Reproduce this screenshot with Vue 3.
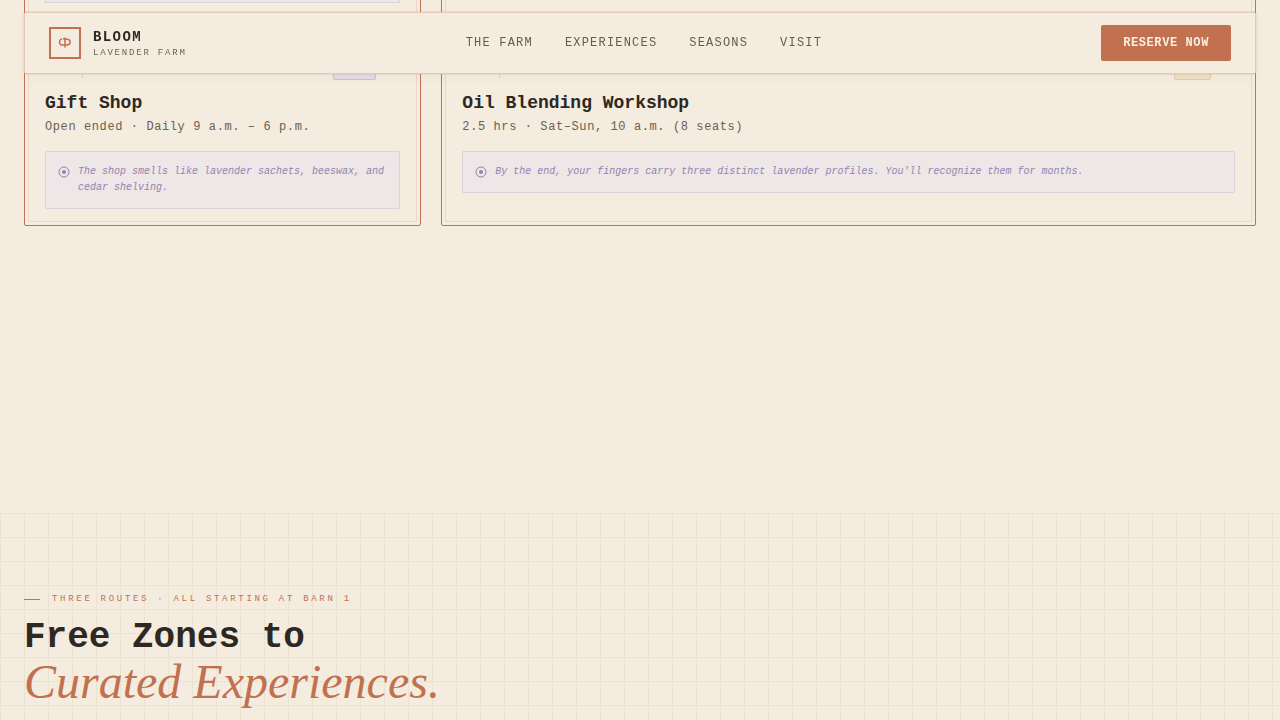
<script setup>
const links = ['The Farm', 'Experiences', 'Seasons', 'Visit']

const cards = [
  {
    title: 'Gift Shop',
    meta: 'Open ended · Daily 9 a.m. – 6 p.m.',
    note: 'The shop smells like lavender sachets, beeswax, and cedar shelving.',
    tone: 'free',
  },
  {
    title: 'Oil Blending Workshop',
    meta: '2.5 hrs · Sat–Sun, 10 a.m. (8 seats)',
    note: "By the end, your fingers carry three distinct lavender profiles. You'll recognize them for months.",
    tone: 'paid',
  },
]
</script>

<template>
  <div class="page">
    <header class="bar">
      <a class="brand" href="#top">
        <span class="mark">
          <svg width="14" height="14" viewBox="0 0 14 14" fill="none" stroke="currentColor" stroke-width="1.5" stroke-linecap="round" aria-hidden="true">
            <path d="M3.500 3C2.200 3.500 1.500 4.600 1.500 5.900c0 1.900 1.500 3.200 3.500 3.200h3.800c2 0 3.300-1.200 3.300-3 0-1.700-1.300-2.900-3-2.900H7.800" />
            <path d="M5.500 2.800c1.100.1 1.500.8 1.500 1.800M7 2v9" />
          </svg>
        </span>
        <span class="words">
          <strong>BLOOM</strong>
          <small>LAVENDER FARM</small>
        </span>
      </a>
      <nav>
        <a v-for="l in links" :key="l" href="#">{{ l }}</a>
      </nav>
      <button type="button" class="reserve">Reserve Now</button>
    </header>

    <main id="top">
      <section class="cards">
        <div class="card tail"><div class="note-end"></div></div>
        <div class="card tail wide"></div>
        <article v-for="c in cards" :key="c.title" class="card" :class="c.tone">
          <div class="top">
            <span class="tile"></span>
            <span class="tag"></span>
          </div>
          <h3>{{ c.title }}</h3>
          <p class="meta">{{ c.meta }}</p>
          <div class="note">
            <svg width="12" height="12" viewBox="0 0 12 12" aria-hidden="true">
              <circle cx="6" cy="6" r="5" fill="none" stroke="currentColor" />
              <circle cx="6" cy="6" r="2" fill="currentColor" />
            </svg>
            <p>{{ c.note }}</p>
          </div>
        </article>
      </section>

      <section class="routes">
        <p class="eyebrow">Three routes · All starting at Barn 1</p>
        <h2>Free Zones to <em>Curated Experiences.</em></h2>
      </section>
    </main>
  </div>
</template>

<style>
body {
  margin: 0;
  background: #f4ecdf;
}
</style>

<style scoped>
.page {
  --clay: #c1714f;
  --ink: #2d2821;
  height: 100vh;
  overflow: hidden;
  background: #f4ecdf;
  color: var(--ink);
  font-family: "Liberation Mono", monospace;
}
h2, h3, p {
  margin: 0;
}
a {
  color: inherit;
  text-decoration: none;
}
.bar {
  position: fixed;
  z-index: 5;
  top: 12px;
  left: 24px;
  right: 24px;
  box-sizing: border-box;
  display: flex;
  align-items: center;
  justify-content: space-between;
  padding: 12px 24px;
  border: 1px solid #e2cab9;
  border-radius: 2px;
  background: #f4ecdf;
  box-shadow: 0 0 2px rgba(193, 113, 79, 0.4), 0 4px 12px rgba(45, 40, 33, 0.03);
}
.brand {
  display: flex;
  align-items: center;
  gap: 12px;
}
.mark {
  display: grid;
  place-items: center;
  box-sizing: border-box;
  width: 32px;
  height: 32px;
  border: 2px solid var(--clay);
  color: var(--clay);
}
.words {
  display: grid;
}
.words strong {
  font-size: 14px;
  line-height: 20px;
  letter-spacing: 0.1em;
}
.words small {
  font-size: 9px;
  line-height: 12px;
  letter-spacing: 0.2em;
  color: #6d6355;
}
nav {
  display: flex;
  gap: 32px;
  font-size: 12px;
  line-height: 18px;
  letter-spacing: 0.1em;
  text-transform: uppercase;
  color: #665c4e;
}
.reserve {
  height: 36px;
  padding: 0 22px;
  border: 0;
  border-radius: 2px;
  background: var(--clay);
  color: #f9eee0;
  font: bold 12px "Liberation Mono", monospace;
  letter-spacing: 0.05em;
  text-transform: uppercase;
}
.cards {
  display: grid;
  grid-template-columns: repeat(3, 1fr);
  gap: 20px;
  padding: 0 24px;
}
.card {
  position: relative;
  box-sizing: border-box;
  padding: 16px 20px;
  border: 1px solid var(--clay);
  border-radius: 2px;
  background: #f4ecde;
}
.card::after {
  content: "";
  position: absolute;
  inset: 3px;
  border: 1px solid #ecd8ca;
  pointer-events: none;
}
.paid, .wide {
  grid-column: span 2;
}
.tail {
  padding-top: 0;
  border-top: 0;
  border-top-left-radius: 0;
  border-top-right-radius: 0;
}
.tail::after {
  top: 0;
  border-top: 0;
}
.note-end {
  height: 2px;
  border: 1px solid #dbd3d8;
  border-top: 0;
  background: #ede7e7;
}
.top {
  display: flex;
  justify-content: space-between;
  height: 23px;
  padding-right: 24px;
}
.tile {
  box-sizing: border-box;
  width: 38px;
  height: 21px;
  border-right: 1px solid #e0d6c8;
}
.tag {
  box-sizing: border-box;
  width: 43px;
  border: 1px solid #cfc0dc;
  border-radius: 2px;
  background: #e6dce8;
}
.paid .tag {
  width: 37px;
  border-color: #dccfa9;
  background: #ede2c6;
}
h3 {
  margin-top: 12px;
  font-size: 18px;
  line-height: 22px;
}
.meta {
  margin-top: 4px;
  font-size: 12px;
  line-height: 18px;
  letter-spacing: 0.05em;
  color: #6a6052;
}
.note {
  display: flex;
  gap: 8px;
  margin-top: 15px;
  padding: 12px;
  border: 1px solid #dbd3d8;
  border-radius: 1px;
  background: #ede7e7;
  color: #9483ae;
  font-size: 10px;
  font-style: italic;
  line-height: 16px;
}
.note svg {
  flex: none;
  margin-top: 2px;
}
.routes {
  margin-top: 287px;
  padding: 80px 24px;
  background-image:
    linear-gradient(#ebe2d4 1px, transparent 1px),
    linear-gradient(90deg, #ebe2d4 1px, transparent 1px);
  background-size: 24px 24px;
}
.eyebrow {
  display: flex;
  align-items: center;
  gap: 12px;
  font-size: 9px;
  line-height: 12px;
  letter-spacing: 0.3em;
  text-transform: uppercase;
  color: var(--clay);
}
.eyebrow::before {
  content: "";
  width: 16px;
  height: 1px;
  background: var(--clay);
}
h2 {
  margin-top: 12px;
  font-size: 36px;
  line-height: 42px;
}
h2 em {
  display: block;
  font: italic 48px/46px "Liberation Serif", serif;
  color: var(--clay);
}
</style>
